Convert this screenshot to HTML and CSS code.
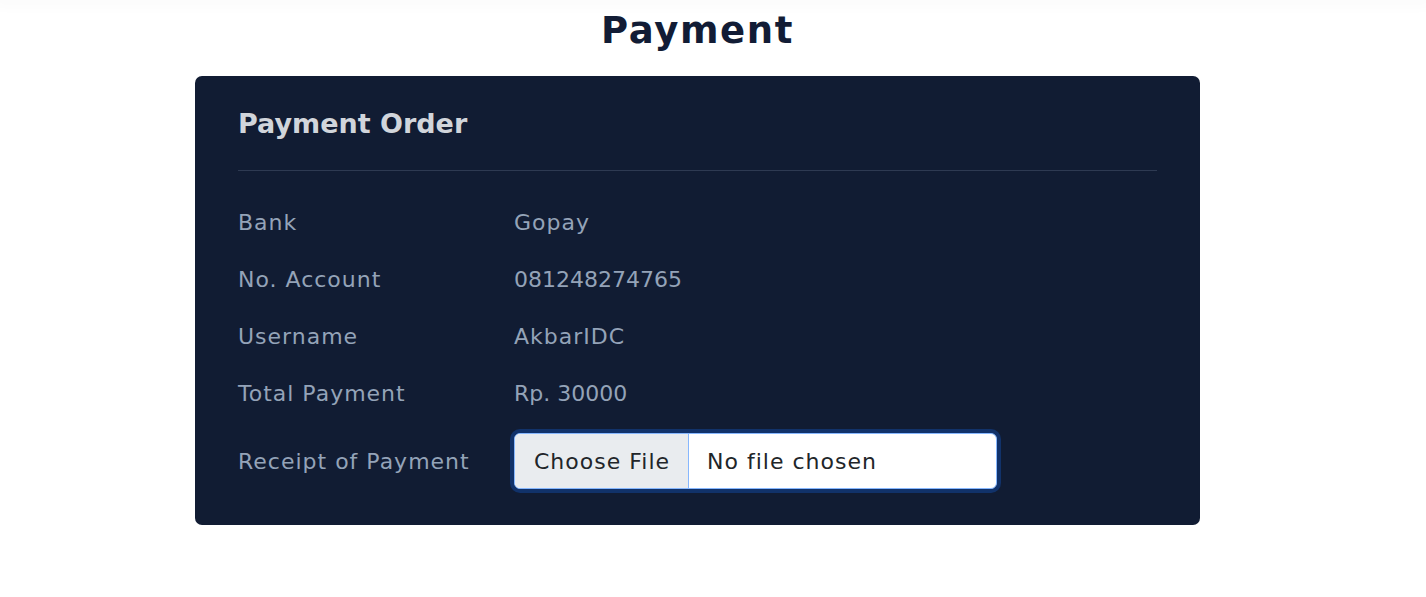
FILE: index.html
```html
<!DOCTYPE html>
<html lang="en">
<head>
<meta charset="utf-8">
<title>Payment</title>
<link rel="stylesheet" href="styles.css">
</head>
<body>
<div class="topbar"></div>
<main class="page">
  <h1 class="title">Payment</h1>
  <section class="card">
    <h2 class="card-title">Payment Order</h2>
    <hr class="divider">
    <div class="rows">
      <div class="row"><span class="label">Bank</span><span class="value">Gopay</span></div>
      <div class="row"><span class="label">No. Account</span><span class="value num">081248274765</span></div>
      <div class="row"><span class="label">Username</span><span class="value">AkbarIDC</span></div>
      <div class="row"><span class="label">Total Payment</span><span class="value num">Rp. 30000</span></div>
      <div class="row row-file"><span class="label">Receipt of Payment</span>
        <div class="file-input is-focused">
          <span class="file-btn">Choose File</span>
          <span class="file-name">No file chosen</span>
        </div>
      </div>
    </div>
  </section>
</main>
</body>
</html>
```
FILE: styles.css
```css
* { box-sizing: border-box; }
html, body { margin: 0; padding: 0; background: #ffffff; }
body {
  font-family: "DejaVu Sans", "Open Sans", sans-serif;
  color: #111c34;
  height: 597px;
  overflow: hidden;
}
.topbar {
  height: 0;
  box-shadow: 0 0 14px 6px rgba(0, 0, 0, 0.025);
}
.page {
  width: 1395px;
  display: flex;
  flex-direction: column;
  align-items: center;
}
.title {
  margin: 7px 0 0;
  height: 69px;
  font-size: 37px;
  line-height: 48px;
  font-weight: 700;
  letter-spacing: 1.6px;
  color: #121c35;
}
.card {
  width: 1005px;
  background: #111c33;
  border-radius: 7px;
  padding: 31px 43px 36px;
}
.card-title {
  margin: 0;
  font-size: 27px;
  line-height: 34px;
  font-weight: 700;
  color: #d1d5db;
}
.divider {
  border: 0;
  border-top: 1px solid #2e3a52;
  margin: 29px 0 35px;
}
.rows {
  display: flex;
  flex-direction: column;
  gap: 24px;
}
.row {
  display: grid;
  grid-template-columns: 276px 1fr;
  align-items: center;
  font-size: 22px;
  line-height: 33px;
  letter-spacing: 1px;
  color: #94a3b8;
}
.row-file { margin-top: -1px; }
.label, .value { white-space: nowrap; }
.num { letter-spacing: 0; }
.file-input {
  width: 483px;
  height: 56px;
  display: flex;
  align-items: stretch;
  background: #ffffff;
  border: 1px solid #86b7fe;
  border-radius: 6px;
  overflow: hidden;
  color: #212529;
  font-size: 22px;
}
.file-input.is-focused {
  box-shadow: 0 0 0 4px #11326a;
}
.file-btn {
  display: flex;
  align-items: center;
  padding: 0 18px 0 19px;
  background: #e9ecef;
  border-right: 1px solid #86b7fe;
}
.file-name {
  display: flex;
  align-items: center;
  padding-left: 18px;
}
```
